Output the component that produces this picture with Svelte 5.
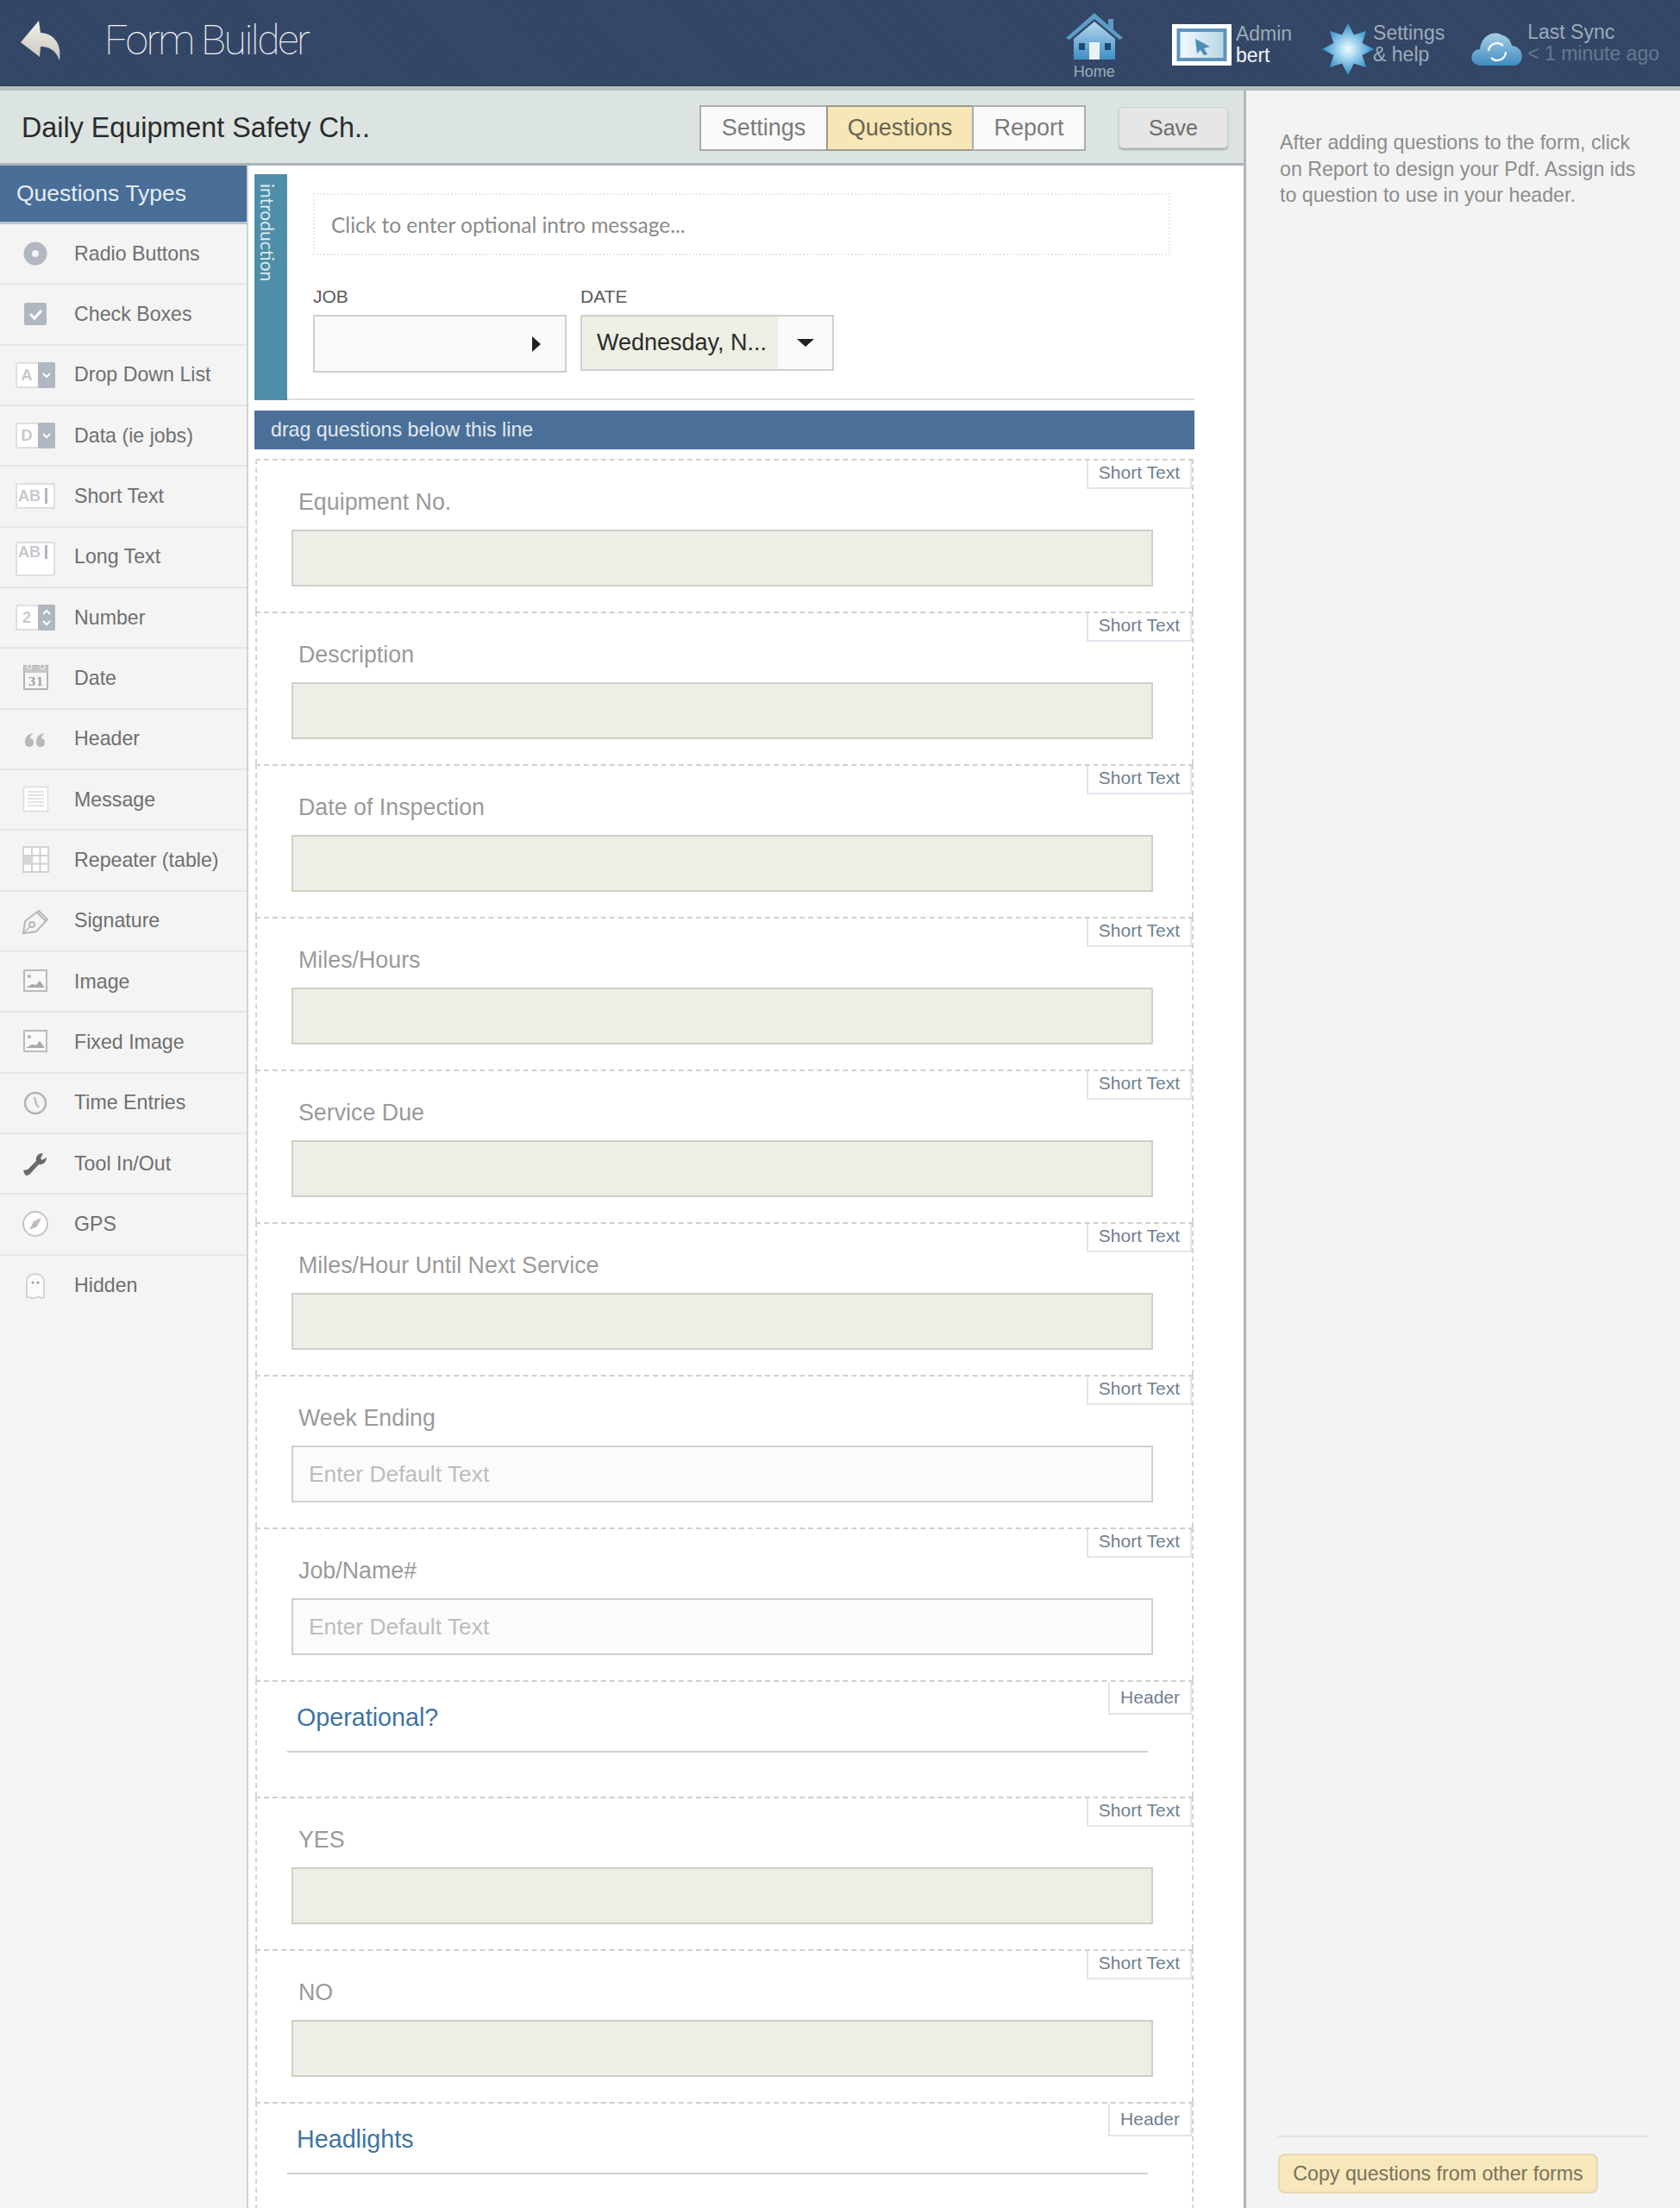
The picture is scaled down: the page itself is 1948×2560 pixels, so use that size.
<script>
  const types = [
    ['radio', 'Radio Buttons'], ['check', 'Check Boxes'], ['drop', 'Drop Down List'], ['data', 'Data (ie jobs)'],
    ['short', 'Short Text'], ['long', 'Long Text'], ['number', 'Number'], ['date', 'Date'], ['header', 'Header'],
    ['message', 'Message'], ['table', 'Repeater (table)'], ['sign', 'Signature'], ['image', 'Image'],
    ['image', 'Fixed Image'], ['time', 'Time Entries'], ['tool', 'Tool In/Out'], ['gps', 'GPS'], ['ghost', 'Hidden']
  ];
  const questions = [
    { kind: 'q', label: 'Equipment No.' }, { kind: 'q', label: 'Description' }, { kind: 'q', label: 'Date of Inspection' },
    { kind: 'q', label: 'Miles/Hours' }, { kind: 'q', label: 'Service Due' }, { kind: 'q', label: 'Miles/Hour Until Next Service' },
    { kind: 'q', label: 'Week Ending', ph: true }, { kind: 'q', label: 'Job/Name#', ph: true },
    { kind: 'h', label: 'Operational?' }, { kind: 'q', label: 'YES' }, { kind: 'q', label: 'NO' }, { kind: 'h', label: 'Headlights' }
  ];
  const gear = Array.from({ length: 16 }, (_, i) => {
    const r = i % 2 ? 18 : 30, a = (i * Math.PI) / 8;
    return `${(30 + r * Math.sin(a)).toFixed(1)},${(30 - r * Math.cos(a)).toFixed(1)}`;
  }).join(' ');
</script>

<div class="app">
  <header class="topbar">
    <svg class="back" width="52" height="50" viewBox="0 0 52 50">
      <defs><linearGradient id="bk" x1="0" y1="0" x2="0" y2="1"><stop offset="0" stop-color="#f2f0ea"/><stop offset="1" stop-color="#c9c6bd"/></linearGradient></defs>
      <path d="M2 27 L23 2 L25 16 C40 17 50 28 47 48 C43 37 36 32 25 32 L24 44 Z" fill="url(#bk)"/>
    </svg>
    <h1>Form Builder</h1>
    <div class="nav">
      <div class="home">
        <svg width="68" height="56" viewBox="0 0 68 56">
          <defs><linearGradient id="hs" x1="0" y1="0" x2="0" y2="1"><stop offset="0" stop-color="#b5d8ec"/><stop offset="1" stop-color="#3f8fc5"/></linearGradient></defs>
          <path d="M50 8 h6 v12 h-6z" fill="#5d9cc6"/>
          <path d="M1 30 L34 1 L67 30 L63 32 L34 8 L5 32 Z" fill="#5d9cc6"/>
          <path d="M10 31 L34 11 L58 31 V55 H10 Z" fill="url(#hs)"/>
          <rect x="16" y="36" width="7" height="8" fill="#1d4a70"/><rect x="46" y="36" width="7" height="8" fill="#1d4a70"/>
          <rect x="28" y="35" width="12" height="20" fill="#e8f3f8"/>
        </svg>
        <span>Home</span>
      </div>
      <div class="item admin">
        <svg width="69" height="48" viewBox="0 0 69 48">
          <defs><linearGradient id="sc" x1="0" y1="0" x2="1" y2="0"><stop offset="0" stop-color="#f4fafd"/><stop offset="1" stop-color="#b5d4e6"/></linearGradient></defs>
          <rect width="69" height="48" fill="#fff"/>
          <rect x="7.5" y="7" width="54" height="34" fill="url(#sc)" stroke="#5d94bd" stroke-width="4"/>
          <path d="M27 17 L44 26 L37 28 L41 35 L37 36 L33 30 L29 34 Z" fill="#4e8db5"/>
        </svg>
        <div><span class="dim">Admin</span><span class="bright">bert</span></div>
      </div>
      <div class="item settings">
        <svg width="60" height="60" viewBox="0 0 60 60">
          <defs><radialGradient id="gr"><stop offset="0" stop-color="#f2fafd"/><stop offset="0.3" stop-color="#b4def3"/><stop offset="1" stop-color="#2f8bc9"/></radialGradient></defs>
          <polygon points={gear} fill="url(#gr)"/>
        </svg>
        <div><span class="dim">Settings</span><span class="dim">&amp; help</span></div>
      </div>
      <div class="item sync">
        <svg width="60" height="42" viewBox="0 0 60 42">
          <defs><linearGradient id="cl" x1="0" y1="0" x2="0" y2="1"><stop offset="0" stop-color="#a9cfe4"/><stop offset="1" stop-color="#3d8cc0"/></linearGradient></defs>
          <path d="M11 41 C-3 41 -3 23 10 22 C11 8 24 0 34 5 C42 7 46 12 47 18 C62 19 63 41 48 41 Z" fill="url(#cl)"/>
          <path d="M20 24 A10 10 0 0 1 37 18 M40 25 A10 10 0 0 1 23 32" fill="none" stroke="#eaf5fa" stroke-width="2.5"/>
        </svg>
        <div><span class="dim">Last Sync</span><span class="faint">&lt; 1 minute ago</span></div>
      </div>
    </div>
  </header>

  <div class="body">
    <div class="left">
      <div class="subheader">
        <h2>Daily Equipment Safety Ch..</h2>
        <div class="tabs">
          <button>Settings</button><button class="on">Questions</button><button>Report</button>
        </div>
        <button class="save">Save</button>
      </div>
      <div class="work">
        <aside class="types">
          <div class="types-title">Questions Types</div>
          {#each types as [icon, name]}
            <div class="type">
              <svg width="48" height="32" viewBox="0 0 48 32">
                {#if icon === 'radio'}
                  <circle cx="24" cy="16" r="13.5" fill="#b0b7c1"/><circle cx="24" cy="16" r="4" fill="#f4f4f4"/>
                {:else if icon === 'check'}
                  <rect x="11" y="3" width="26" height="26" rx="2" fill="#b0b7c1"/><path d="M18 16 l5 5 l8 -9" fill="none" stroke="#fff" stroke-width="3"/>
                {:else if icon === 'drop' || icon === 'data'}
                  <rect x="2" y="2" width="44" height="28" rx="1.5" fill="#fff" stroke="#dedede" stroke-width="2"/>
                  <rect x="27" y="1" width="20" height="30" rx="1.5" fill="#b0b7c1"/>
                  <path d="M33 14 l4 4 l4 -4" fill="none" stroke="#fff" stroke-width="2"/>
                  <text x="14" y="22" class="ico-t">{icon === 'drop' ? 'A' : 'D'}</text>
                {:else if icon === 'short'}
                  <rect x="2" y="2" width="44" height="28" rx="1.5" fill="#fff" stroke="#dedede" stroke-width="2"/>
                  <text x="17" y="22" class="ico-t">AB</text><rect x="35" y="7" width="3" height="18" fill="#b0b7c1"/>
                {:else if icon === 'long'}
                  <rect x="2" y="-1" width="44" height="38" rx="1.5" fill="#fff" stroke="#dedede" stroke-width="2"/>
                  <text x="17" y="16" class="ico-t">AB</text><rect x="35" y="2" width="3" height="16" fill="#b0b7c1"/>
                {:else if icon === 'number'}
                  <rect x="2" y="2" width="44" height="28" rx="1.5" fill="#fff" stroke="#dedede" stroke-width="2"/>
                  <rect x="27" y="1" width="20" height="30" rx="1.5" fill="#b0b7c1"/>
                  <path d="M33 12 l4 -4 l4 4 M33 20 l4 4 l4 -4" fill="none" stroke="#fff" stroke-width="2"/>
                  <text x="14" y="22" class="ico-t">2</text>
                {:else if icon === 'date'}
                  <rect x="11" y="2" width="27" height="27" fill="#f7f7f7" stroke="#b4b4b4" stroke-width="2"/>
                  <rect x="11" y="2" width="27" height="8" fill="#c6c6c6"/>
                  <circle cx="17" cy="3" r="3" fill="#c6c6c6" stroke="#f4f4f4" stroke-width="1"/><circle cx="32" cy="3" r="3" fill="#c6c6c6" stroke="#f4f4f4" stroke-width="1"/>
                  <text x="24.5" y="25" class="ico-d">31</text>
                {:else if icon === 'header'}
                  <path d="M22 9 C14 10 12 15 12 20 a5 5 0 1 0 6 -5 C18 13 19 11 22 9 Z M35 9 C27 10 25 15 25 20 a5 5 0 1 0 6 -5 C31 13 32 11 35 9 Z" fill="#b8b8b8"/>
                {:else if icon === 'message'}
                  <rect x="10.5" y="1.5" width="28" height="28" fill="#fff" stroke="#dcdcdc" stroke-width="1.5"/>
                  <path d="M15 7 h19 M15 11 h19 M15 15 h19 M15 19 h19 M15 23 h19" stroke="#dcdcdc" stroke-width="1.5"/>
                {:else if icon === 'table'}
                  <rect x="10" y="1" width="29" height="29" fill="#fff" stroke="#d2d2d2" stroke-width="2"/>
                  <rect x="10" y="11" width="10" height="9" fill="#d6d6d6"/>
                  <path d="M20 1 v29 M29.500 1 v29 M10 11 h29 M10 20.500 h29" stroke="#d2d2d2" stroke-width="2"/>
                {:else if icon === 'sign'}
                  <path d="M10 30 L12 16 L28 4 L38 14 L25 28 Z M26 6 L36 16" fill="none" stroke="#b8b8b8" stroke-width="2"/>
                  <circle cx="20" cy="20" r="3" fill="none" stroke="#b8b8b8" stroke-width="2"/><path d="M11 29 L18 22" stroke="#b8b8b8" stroke-width="1.5"/>
                {:else if icon === 'image'}
                  <rect x="11" y="3" width="26" height="24" fill="#f8f8f8" stroke="#b8bcc2" stroke-width="2"/>
                  <circle cx="17" cy="10" r="2" fill="#b0b0b0"/><path d="M13 23 L20 19 L25 20 L29 15 L35 23 Z" fill="#a9a9a9"/>
                {:else if icon === 'time'}
                  <circle cx="24" cy="16" r="12" fill="#f4f4f4" stroke="#b4b4b4" stroke-width="2.500"/><path d="M23 9 L25 17 L28 21" fill="none" stroke="#b4b4b4" stroke-width="2"/>
                {:else if icon === 'tool'}
                  <path d="M11 27 L13 30 L17 29 L28 17 C33 18 37 14 37 9 L32 12 L30 10 L33 4 C28 4 24 7 25 13 L15 23 L10 24 Z" fill="#6a6a6a"/>
                {:else if icon === 'gps'}
                  <circle cx="24" cy="16" r="14" fill="#fff" stroke="#c4c4c4" stroke-width="2"/><path d="M31 9 L26 19 L17 23 L22 13 Z" fill="#c4b8b8"/>
                {:else if icon === 'ghost'}
                  <path d="M14 29 V11 C14 -1 34 -1 34 11 V29 C31 32 28 27 25 29 C21 32 17 28 14 29 Z" fill="#fbfbfb" stroke="#d4d4d4" stroke-width="2"/>
                  <circle cx="21" cy="12" r="1.500" fill="#999"/><circle cx="27" cy="12" r="1.500" fill="#999"/>
                {/if}
              </svg>
              <span>{name}</span>
            </div>
          {/each}
        </aside>
        <main class="canvas">
          <section class="intro">
            <div class="intro-tab"><span>introduction</span></div>
            <div class="intro-body">
              <div class="intro-msg">Click to enter optional intro message...</div>
              <div class="fields">
                <div class="field">
                  <label for="job">JOB</label>
                  <div id="job" class="job"><i class="arrow-r"></i></div>
                </div>
                <div class="field">
                  <label for="date">DATE</label>
                  <div id="date" class="date"><span>Wednesday, N...</span><div class="caret"><i class="arrow-d"></i></div></div>
                </div>
              </div>
            </div>
          </section>
          <div class="dragbar">drag questions below this line</div>
          {#each questions as q}
            {#if q.kind === 'q'}
              <div class="q">
                <span class="badge">Short Text</span>
                <div class="q-label">{q.label}</div>
                {#if q.ph}
                  <div class="inp ph">Enter Default Text</div>
                {:else}
                  <div class="inp"></div>
                {/if}
              </div>
            {:else}
              <div class="q hd">
                <span class="badge">Header</span>
                <div class="hd-label">{q.label}</div>
                <div class="hd-line"></div>
              </div>
            {/if}
          {/each}
        </main>
      </div>
    </div>
    <aside class="right">
      <p>After adding questions to the form, click on Report to design your Pdf. Assign ids to question to use in your header.</p>
      <div class="copy"><button>Copy questions from other forms</button></div>
    </aside>
  </div>
</div>

<style>
  :global(body) { margin: 0; background: #fff; }
  .app {
    width: 1948px; height: 2560px; overflow: hidden; display: flex; flex-direction: column;
    font-family: "Liberation Sans", Arial, sans-serif;
  }
  .topbar {
    height: 100px; flex: none; display: flex; align-items: center; position: relative;
    background: repeating-linear-gradient(45deg, #37496a 0 2px, #314463 2px 4px);
    border-bottom: 5px solid #b4c2bb; box-shadow: inset 0 -1px 0 #263a55;
  }
  .back { margin-left: 22px; margin-top: -7px; }
  h1 {
    margin: -8px 0 0 47px; font: 100 48px Roboto, sans-serif; color: #f1f3f5; letter-spacing: -2.4px;
  }
  .nav { margin-left: auto; display: flex; align-items: center; height: 100px; }
  .home { width: 68px; display: flex; flex-direction: column; align-items: center; margin-right: 56px; margin-top: 3px; }
  .home svg { margin-top: 4px; }
  .home span { font-size: 18px; color: #9fadbb; margin-top: 3px; }
  .item { display: flex; align-items: center; }
  .item div { display: flex; flex-direction: column; font-size: 23px; line-height: 25px; }
  .admin { margin-right: 35px; margin-top: 4px; }
  .admin div { margin-left: 5px; }
  .settings { margin-right: 31px; margin-top: 14px; }
  .settings div { margin-left: -1px; margin-top: -12px; }
  .sync { margin-right: 24px; margin-top: 12px; }
  .sync div { margin-left: 5px; margin-top: -12px; }
  .dim { color: #9dabb9; }
  .bright { color: #f2f4f6; }
  .faint { color: #66788f; }

  .body { flex: 1; display: flex; min-height: 0; }
  .left { width: 1442px; flex: none; display: flex; flex-direction: column; border-right: 3px solid #b2b5b5; }
  .subheader {
    height: 82px; padding-top: 2px; flex: none; display: flex; align-items: center; background: #dce4e3; border-bottom: 3px solid #aab4b8;
  }
  h2 { margin: 0; padding-left: 25px; font-weight: 400; font-size: 32.300px; color: #2b2b2b; flex: 1; }
  .tabs { display: flex; margin-right: 38px; }
  .tabs button {
    height: 53px; background: #fafafa; border: 2px solid #a9acac; border-right-width: 0; width: 147px;
    font: 27px "Liberation Sans", sans-serif; color: #7b7b7b; padding: 0;
  }
  .tabs button.on { width: 169px; background: #f7e7b7; color: #6a6350; border-color: #a09a85; }
  .tabs button:last-child { width: 132px; border-right-width: 2px; }
  .save {
    width: 127px; height: 48px; margin-right: 18px; background: #e6e6e6; border: 1px solid #cfcfcf; border-radius: 5px;
    font: 25px "Liberation Sans", sans-serif; color: #6d6d6d; box-shadow: 0 2px 2px #a9b0b0; padding: 0;
  }

  .work { flex: 1; display: flex; min-height: 0; }
  .types { width: 286px; flex: none; background: #f4f4f4; border-right: 2px solid #cfd2d2; }
  .types-title {
    background: #496e98; color: #e6edf3; font-size: 26.500px; display: flex; align-items: center; padding-left: 19px;
    border-bottom: 3px solid #b9c1c9; box-sizing: border-box; height: 68px;
  }
  .type {
    height: 70.33px; box-sizing: border-box; display: flex; align-items: center; border-bottom: 2px solid #e6e6e6;
    font-size: 23.200px; color: #6e6f70;
  }
  .type:last-child { border-bottom: 0; }
  .type svg { margin-left: 17px; margin-right: 21px; flex: none; overflow: visible; }
  .ico-t { font: 700 18px "Liberation Sans", sans-serif; fill: #c8c8c8; text-anchor: middle; }
  .ico-d { font: 700 13px "DejaVu Serif", serif; fill: #a5a5a5; text-anchor: middle; }

  .canvas { flex: 1; padding: 10px 57px 0 7px; min-width: 0; }
  .intro { display: flex; height: 262px; }
  .intro-tab {
    width: 38px; background: #4f8ea8; color: #dcecf2; font: 21px Lato, sans-serif; flex: none;
  }
  .intro-tab span { writing-mode: vertical-rl; padding-top: 11px; display: block; margin-left: 3px; }
  .intro-body { flex: 1; padding-left: 30px; border-bottom: 2px solid #dddddd; }
  .intro-msg {
    margin-top: 22px; width: 994px; height: 72px; box-sizing: border-box; border: 2px dotted #e9e9e9;
    font: 24.500px Lato, sans-serif; color: #8a8a8a; display: flex; align-items: center; padding-left: 19px;
  }
  .fields { display: flex; gap: 16px; margin-top: 36px; }
  .field { width: 294px; display: flex; flex-direction: column; }
  label { font-size: 21px; color: #5a5a5a; line-height: 24px; margin-bottom: 9px; }
  .job {
    height: 67px; box-sizing: border-box; background: #fafafa; border: 2px solid #cfcfcf; display: flex; align-items: center; justify-content: flex-end; padding-right: 28px;
  }
  .arrow-r { border-left: 10px solid #222; border-top: 9px solid transparent; border-bottom: 9px solid transparent; }
  .date {
    height: 65px; box-sizing: border-box; background: #fafafa; border: 2px solid #cfcfcf; display: flex; align-items: stretch;
  }
  .date span {
    width: 227px; background: #edeee4; font-size: 27px; color: #2b2b2b; display: flex; align-items: center; padding-left: 17px; box-sizing: border-box; white-space: nowrap;
  }
  .caret { flex: 1; display: flex; align-items: center; justify-content: center; }
  .arrow-d { border-top: 9px solid #222; border-left: 10px solid transparent; border-right: 10px solid transparent; }
  .dragbar {
    margin-top: 12px; height: 45px; background: #4a7099; color: #e2e9f0; font-size: 23.200px; display: flex; align-items: center; padding-left: 19px;
  }
  .q {
    position: relative; margin-top: 11px; height: 177px; margin-bottom: -11px; box-sizing: border-box; padding: 33px 46px 0 42px;
    border-top: 2px dashed #cfcfcf; border-left: 2px dashed #d4d4d4; border-right: 2px dashed #d4d4d4; margin-left: 1px; margin-right: 1px;
  }
  .q.hd { height: 135px; padding: 0; }
  .badge {
    position: absolute; top: 0; right: 0; height: 33px; padding: 0 12px 3px; box-sizing: border-box; background: #fff;
    border: 2px solid #dfe6ed; border-top: 0; border-right-width: 2px; font-size: 21px; color: #6f8092; display: flex; align-items: center;
  }
  .hd .badge { height: 38px; padding-bottom: 0; }
  .q-label { font-size: 26.800px; line-height: 30px; color: #9a9a9a; margin-left: 6px; margin-bottom: 17px; }
  .inp {
    height: 66px; margin-left: -2px; margin-right: -1px; box-sizing: border-box; background: #edeee5; border: 2px solid #cfcfc9;
    font-size: 26.400px; display: flex; align-items: center; padding-left: 18px;
  }
  .inp.ph { background: #fbfbfb; color: #bdbdbd; }
  .hd-label { position: absolute; left: 46px; top: 24px; font-size: 28.700px; line-height: 34px; color: #3e74a5; }
  .hd-line { position: absolute; left: 35px; width: 998px; top: 80px; border-top: 2px solid #cdd0d2; }

  .right { flex: 1; background: #f3f3f3; display: flex; flex-direction: column; min-width: 0; padding: 45px 38px 17px 37px; box-sizing: border-box; }
  .right p { margin: 0 0 0 2px; font-size: 23.200px; line-height: 30.500px; color: #8c8c8c; flex: 1; }
  .copy { border-top: 2px solid #e2e2e2; padding-top: 19px; }
  .copy button {
    width: 371px; height: 46px; background: #f6e8bc; border: 2px solid #e6d9ae; border-radius: 8px; padding: 0;
    font: 23.200px "Liberation Sans", sans-serif; color: #7a7258;
  }
</style>
